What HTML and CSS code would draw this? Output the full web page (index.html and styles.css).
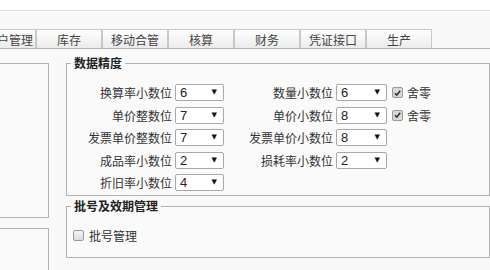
FILE: index.html
```html
<!DOCTYPE html>
<html lang="zh-CN">
<head>
<meta charset="utf-8">
<title>参数设置</title>
<link rel="stylesheet" href="styles.css">
</head>
<body>
<div class="topbar"></div>
<div class="tabs">
  <div class="tab tab-first"><span>用户管理</span></div>
  <div class="tab">库存</div>
  <div class="tab">移动合管</div>
  <div class="tab">核算</div>
  <div class="tab">财务</div>
  <div class="tab">凭证接口</div>
  <div class="tab">生产</div>
</div>
<div class="main">
  <div class="side">
    <div class="panel panel-a"></div>
    <div class="panel panel-b"></div>
  </div>
  <div class="content">
    <fieldset class="group group-precision">
      <legend>数据精度</legend>
      <div class="grid">
        <label class="lbl">换算率小数位</label>
        <span class="sel"><span class="val">6</span><span class="arrow">▼</span></span>
        <label class="lbl">数量小数位</label>
        <span class="sel"><span class="val">6</span><span class="arrow">▼</span></span>
        <span class="chk"><span class="box checked"><svg viewBox="0 0 10 10" width="10" height="10"><path d="M2.2 5.2 L4.2 7.4 L8 2.6" fill="none" stroke="#2b2b2b" stroke-width="1.7"/></svg></span>舍零</span>

        <label class="lbl">单价整数位</label>
        <span class="sel"><span class="val">7</span><span class="arrow">▼</span></span>
        <label class="lbl">单价小数位</label>
        <span class="sel"><span class="val">8</span><span class="arrow">▼</span></span>
        <span class="chk"><span class="box checked"><svg viewBox="0 0 10 10" width="10" height="10"><path d="M2.2 5.2 L4.2 7.4 L8 2.6" fill="none" stroke="#2b2b2b" stroke-width="1.7"/></svg></span>舍零</span>

        <label class="lbl">发票单价整数位</label>
        <span class="sel"><span class="val">7</span><span class="arrow">▼</span></span>
        <label class="lbl">发票单价小数位</label>
        <span class="sel"><span class="val">8</span><span class="arrow">▼</span></span>
        <span></span>

        <label class="lbl">成品率小数位</label>
        <span class="sel"><span class="val">2</span><span class="arrow">▼</span></span>
        <label class="lbl">损耗率小数位</label>
        <span class="sel"><span class="val">2</span><span class="arrow">▼</span></span>
        <span></span>

        <label class="lbl">折旧率小数位</label>
        <span class="sel"><span class="val val-mod">4</span><span class="arrow">▼</span></span>
      </div>
    </fieldset>
    <fieldset class="group group-batch">
      <legend>批号及效期管理</legend>
      <span class="chk chk-batch"><span class="box"></span>批号管理</span>
    </fieldset>
  </div>
</div>
</body>
</html>
```
FILE: styles.css
```css
html, body {
  margin: 0;
  padding: 0;
}
body {
  width: 490px;
  height: 270px;
  overflow: hidden;
  background: #f9f9f9;
  font-family: "Noto Sans CJK SC", "Microsoft YaHei", sans-serif;
  font-size: 12px;
  color: #333;
}
.topbar {
  height: 10px;
  background: #ffffff;
  border-bottom: 1px solid #e2e2e2;
}
.tabs {
  display: flex;
  margin-top: 18px;
  height: 19px;
  border-bottom: 1px solid #b4b4b4;
}
.tab {
  box-sizing: border-box;
  width: 66px;
  height: 19px;
  border: 1px solid #c8c8c8;
  border-bottom: none;
  background: linear-gradient(#ffffff, #ebebeb);
  display: flex;
  align-items: center;
  justify-content: center;
  color: #444;
  line-height: 17px;
  white-space: nowrap;
  flex: none;
}
.tab-first {
  width: 36px;
  border-left: none;
  justify-content: flex-end;
  padding-right: 2px;
  overflow: hidden;
}
.tab-first span {
  flex: none;
}
.main {
  display: flex;
  margin-top: 6px;
}
.side {
  width: 49px;
  margin-top: 8px;
  flex: none;
}
.panel {
  box-sizing: border-box;
  border: 1px solid #b2b2b2;
  border-left: none;
  background: #fafafa;
}
.panel-a {
  height: 155px;
}
.panel-b {
  height: 50px;
  margin-top: 10px;
}
.content {
  margin-left: 17px;
  width: 424px;
  flex: none;
}
.group {
  box-sizing: border-box;
  margin: 0;
  border: 1px solid #b2b2b2;
  background: #fafafa;
  min-width: 0;
}
.group legend {
  font-weight: bold;
  color: #222;
  padding: 0 3px;
  margin-left: 4px;
  line-height: 16px;
  font-size: 12px;
}
.group-precision {
  height: 141px;
  padding: 13px 0 0 0;
}
.group-batch {
  margin-top: 2px;
  height: 60px;
  padding: 13px 0 0 0;
}
.grid {
  display: grid;
  margin-left: 20px;
  grid-template-columns: 85px 49px 106px 51px auto;
  grid-auto-rows: 17px;
  column-gap: 3px;
  row-gap: 5.5px;
  align-items: center;
}
.lbl {
  text-align: right;
  white-space: nowrap;
  color: #333;
  line-height: 17px;
}
.sel {
  box-sizing: border-box;
  height: 17px;
  border: 1px solid #a9a9a9;
  border-radius: 2px;
  background: #ffffff;
  display: flex;
  align-items: center;
  justify-content: space-between;
  padding: 0 6px 0 4px;
}
.val {
  font-family: "Liberation Sans", Arial, sans-serif;
  font-size: 13px;
  color: #222;
  line-height: 15px;
}
.val-mod {
  color: #4a1414;
}
.arrow {
  font-family: "DejaVu Sans", sans-serif;
  font-size: 7px;
  color: #111;
  line-height: 15px;
}
.chk {
  display: flex;
  align-items: center;
  gap: 4px;
  margin-left: 2px;
  white-space: nowrap;
  color: #333;
}
.box {
  box-sizing: border-box;
  width: 11px;
  height: 11px;
  border: 1px solid #9a9a9a;
  border-radius: 2px;
  background: linear-gradient(#f4f4f4, #dcdcdc);
  display: flex;
  align-items: center;
  justify-content: center;
}
.box svg {
  display: block;
}
.box.checked {
  background: #d8d8d8;
}
.chk-batch {
  gap: 5px;
  margin-left: 6px;
}
```
